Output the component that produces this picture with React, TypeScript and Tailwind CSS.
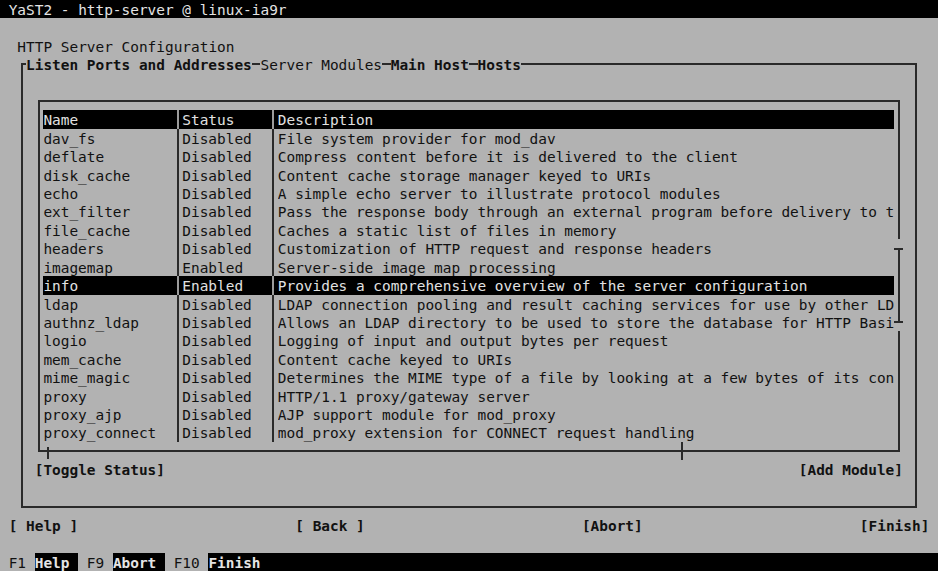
type Mod = { name: string; status: string; desc: string }

const MODULES: Mod[] = [
  { name: 'dav_fs', status: 'Disabled', desc: 'File system provider for mod_dav' },
  { name: 'deflate', status: 'Disabled', desc: 'Compress content before it is delivered to the client' },
  { name: 'disk_cache', status: 'Disabled', desc: 'Content cache storage manager keyed to URIs' },
  { name: 'echo', status: 'Disabled', desc: 'A simple echo server to illustrate protocol modules' },
  { name: 'ext_filter', status: 'Disabled', desc: 'Pass the response body through an external program before delivery to the client' },
  { name: 'file_cache', status: 'Disabled', desc: 'Caches a static list of files in memory' },
  { name: 'headers', status: 'Disabled', desc: 'Customization of HTTP request and response headers' },
  { name: 'imagemap', status: 'Enabled', desc: 'Server-side image map processing' },
  { name: 'info', status: 'Enabled', desc: 'Provides a comprehensive overview of the server configuration' },
  { name: 'ldap', status: 'Disabled', desc: 'LDAP connection pooling and result caching services for use by other LDAP modules' },
  { name: 'authnz_ldap', status: 'Disabled', desc: 'Allows an LDAP directory to be used to store the database for HTTP Basic authentication' },
  { name: 'logio', status: 'Disabled', desc: 'Logging of input and output bytes per request' },
  { name: 'mem_cache', status: 'Disabled', desc: 'Content cache keyed to URIs' },
  { name: 'mime_magic', status: 'Disabled', desc: 'Determines the MIME type of a file by looking at a few bytes of its contents' },
  { name: 'proxy', status: 'Disabled', desc: 'HTTP/1.1 proxy/gateway server' },
  { name: 'proxy_ajp', status: 'Disabled', desc: 'AJP support module for mod_proxy' },
  { name: 'proxy_connect', status: 'Disabled', desc: 'mod_proxy extension for CONNECT request handling' },
]

function Sep({ inverted }: { inverted: boolean }) {
  return (
    <div className="w-[1ch] flex justify-center">
      <div className={inverted ? 'w-[2px] h-full bg-[#9c9c9c]' : 'w-[2px] h-full bg-[#2a2a2a]'} />
    </div>
  )
}

function Row({ name, status, desc, inverted }: Mod & { inverted: boolean }) {
  return (
    <div className={`flex h-[18.42px] w-[98ch] whitespace-pre ${inverted ? 'bg-black text-[#e2e2e2]' : ''}`}>
      <div className="w-[15ch] overflow-x-clip">{name}</div>
      <Sep inverted={inverted} />
      <div className="w-[10ch] overflow-x-clip">{status}</div>
      <Sep inverted={inverted} />
      <div className="w-[71ch] overflow-x-clip">{desc}</div>
    </div>
  )
}

function ModuleTable() {
  return (
    <div className="relative ml-[calc(2ch_-_2px)] mt-[26.63px] w-[calc(99ch_+_2px)] border-2 border-[#2a2a2a] pt-[8.21px] pb-[8.21px] pl-[calc(0.5ch_-_1px)]">
      <Row name="Name" status="Status" desc="Description" inverted />
      {MODULES.map(m => <Row key={m.name} {...m} inverted={m.name === 'info'} />)}

      {/* vertical scrollbar thumb on the right border */}
      <div className="absolute top-[137.16px] right-[-3px] w-[4px] h-[8.2px] bg-[#b2b2b2]" />
      <div className="absolute top-[145.4px] right-[calc(-0.5ch_-_1px)] w-[1ch] h-[2px] bg-[#2a2a2a]" />
      <div className="absolute top-[219.05px] right-[calc(-0.5ch_-_1px)] w-[1ch] h-[2px] bg-[#2a2a2a]" />
      <div className="absolute top-[221.05px] right-[-3px] w-[4px] h-[8.2px] bg-[#b2b2b2]" />

      {/* horizontal scrollbar marks on the bottom border */}
      <div className="absolute top-[344.4px] left-[calc(1ch_-_2px)] w-[2px] h-[12px] bg-[#2a2a2a]" />
      <div className="absolute top-[339.7px] left-[calc(74ch_-_2px)] w-[2px] h-[18px] bg-[#2a2a2a]" />
    </div>
  )
}

export default function App() {
  return (
    <div className="w-[938px] h-[571px] overflow-hidden bg-[#b2b2b2] text-[#111] font-['DejaVu_Sans_Mono',monospace] text-[14.43px] leading-[21px]">
      <div className="h-[18.42px] bg-black text-[#e4e4e4] pl-[1ch] whitespace-pre">YaST2 - http-server @ linux-ia9r</div>
      <div className="h-[18.42px]" />
      <div className="h-[18.42px] pl-[2ch] whitespace-pre">HTTP Server Configuration</div>

      <div className="ml-[calc(2.5ch_-_1px)] mt-[8.21px] w-[calc(103ch_+_2px)] h-[444.08px] border-2 border-[#2a2a2a]">
        <div className="mt-[-10.21px] h-[18.42px] pl-[calc(0.5ch_-_1px)] flex whitespace-pre">
          <span className="bg-[#b2b2b2] font-bold">Listen Ports and Addresses</span>
          <span className="w-[1ch]" />
          <span className="bg-[#b2b2b2]">Server Modules</span>
          <span className="w-[1ch]" />
          <span className="bg-[#b2b2b2] font-bold">Main Host</span>
          <span className="w-[1ch]" />
          <span className="bg-[#b2b2b2] font-bold">Hosts</span>
        </div>

        <ModuleTable />

        <div className="mt-[8.21px] h-[18.42px] flex justify-between pl-[calc(1.5ch_-_1px)] pr-[calc(1.5ch_-_1px)] font-bold whitespace-pre">
          <span>[Toggle Status]</span>
          <span>[Add Module]</span>
        </div>
      </div>

      <div className="mt-[8.21px] h-[18.42px] flex justify-between px-[1ch] font-bold whitespace-pre">
        <span>[ Help ]</span>
        <span>[ Back ]</span>
        <span>[Abort]</span>
        <span>[Finish]</span>
      </div>
      <div className="h-[18.42px]" />
      <div className="h-[18.42px] flex bg-black text-[#e4e4e4] font-bold whitespace-pre">
        <span className="bg-[#b2b2b2] text-[#111] font-normal"> F1 </span>
        <span>Help </span>
        <span className="bg-[#b2b2b2] text-[#111] font-normal"> F9 </span>
        <span>Abort </span>
        <span className="bg-[#b2b2b2] text-[#111] font-normal"> F10 </span>
        <span>Finish</span>
      </div>
    </div>
  )
}
